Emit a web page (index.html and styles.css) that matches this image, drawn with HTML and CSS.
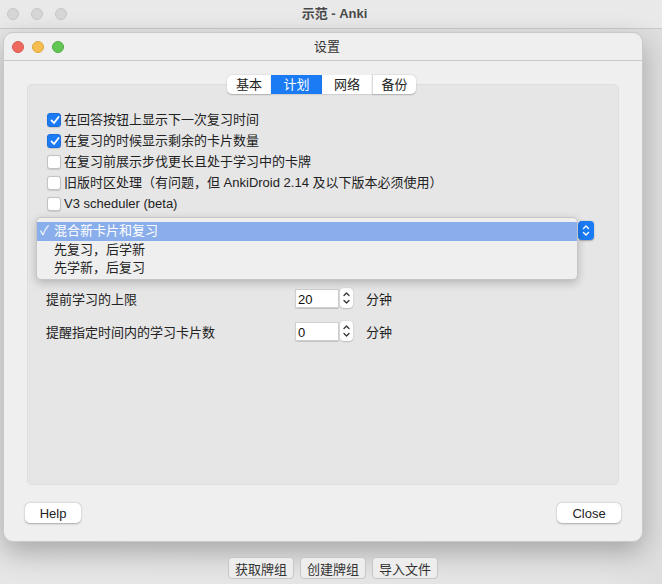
FILE: index.html
```html
<!DOCTYPE html>
<html lang="zh-CN">
  <head>
    <meta charset="UTF-8" />
    <meta name="viewport" content="width=device-width, initial-scale=1.0" />
    <title>设置</title>
    <link rel="stylesheet" href="styles.css">
  </head>
  <body>
    <div class="main_bar">
      <div class="lights">
        <span class="dot gray"></span>
        <span class="dot gray"></span>
        <span class="dot gray"></span>
      </div>
      <div class="main_title">示范 - Anki</div>
    </div>

    <div class="dialog">
      <div class="dlg_bar">
        <div class="lights">
          <span class="dot red"></span>
          <span class="dot yellow"></span>
          <span class="dot green"></span>
        </div>
        <div class="dlg_title">设置</div>
      </div>

      <div class="dlg_body">
        <ul class="tabs">
          <li class="tab first">基本</li>
          <li class="tab on">计划</li>
          <li class="tab">网络</li>
          <li class="tab last">备份</li>
        </ul>

        <div class="pane">
          <ul class="checks">
            <li><span class="box checked"><svg viewBox="0 0 14 14"><path d="M3.5 7.4 L6 10 L10.6 4" /></svg></span>在回答按钮上显示下一次复习时间</li>
            <li><span class="box checked"><svg viewBox="0 0 14 14"><path d="M3.5 7.4 L6 10 L10.6 4" /></svg></span>在复习的时候显示剩余的卡片数量</li>
            <li><span class="box"></span>在复习前展示步伐更长且处于学习中的卡牌</li>
            <li><span class="box"></span>旧版时区处理（有问题，但 AnkiDroid 2.14 及以下版本必须使用）</li>
            <li><span class="box"></span>V3 scheduler (beta)</li>
          </ul>

          <div class="combo_row">
            <div class="combo">
              <span class="combo_btn">
                <svg viewBox="0 0 16 19"><path d="M5.5 7.5 L8 5 L10.5 7.5 M5.5 11.5 L8 14 L10.5 11.5" /></svg>
              </span>
            </div>
          </div>

          <div class="spin_row first_spin">
            <span class="spin_label">提前学习的上限</span>
            <span class="spin_input">20</span>
            <span class="stepper"><svg viewBox="0 0 13 20"><path d="M4 7.5 L6.5 5 L9 7.5 M4 12.5 L6.5 15 L9 12.5" /></svg></span>
            <span class="unit">分钟</span>
          </div>
          <div class="spin_row">
            <span class="spin_label">提醒指定时间内的学习卡片数</span>
            <span class="spin_input">0</span>
            <span class="stepper"><svg viewBox="0 0 13 20"><path d="M4 7.5 L6.5 5 L9 7.5 M4 12.5 L6.5 15 L9 12.5" /></svg></span>
            <span class="unit">分钟</span>
          </div>

          <!-- 펼쳐진 팝업 -->
          <ul class="popup">
            <li class="sel"><span class="tick">✓</span>混合新卡片和复习</li>
            <li><span class="tick"></span>先复习，后学新</li>
            <li><span class="tick"></span>先学新，后复习</li>
          </ul>
        </div>

        <div class="footer">
          <button class="btn">Help</button>
          <button class="btn close">Close</button>
        </div>
      </div>
    </div>

    <div class="main_buttons">
      <button class="mbtn">获取牌组</button>
      <button class="mbtn">创建牌组</button>
      <button class="mbtn">导入文件</button>
    </div>
  </body>
</html>
```

FILE: styles.css
```css
* {
  margin: 0;
  padding: 0;
  box-sizing: border-box;
}
li {
  list-style: none;
}
body {
  width: 662px;
  height: 584px;
  overflow: hidden;
  background: linear-gradient(to right, #e6e6e6 0%, #e4e4e4 90%, #dedede 100%);
  font-family: "Liberation Sans", "Noto Sans CJK SC", sans-serif;
  font-size: 13px;
  color: #222;
}

/* 창 제목줄 */
.main_bar {
  height: 29px;
  background: #e9e9e9;
  border-bottom: 1px solid #cacaca;
  display: flex;
  align-items: center;
  padding-left: 7px;
}
.lights {
  display: flex;
  gap: 12px;
}
.dot {
  width: 12px;
  height: 12px;
  border-radius: 50%;
  display: block;
}
.dot.gray {
  background: #d6d6d6;
  border: 0.5px solid #c6c6c6;
}
.dot.red {
  background: #ee6a5f;
  border: 0.5px solid #d85a50;
}
.dot.yellow {
  background: #f5be4f;
  border: 0.5px solid #dea73e;
}
.dot.green {
  background: #62c655;
  border: 0.5px solid #50ad45;
}
.main_title,
.dlg_title {
  flex: 1;
  text-align: center;
  color: #4a4a4a;
  font-weight: bold;
  font-size: 13px;
  line-height: 16px;
}
.main_bar .main_title {
  margin-right: 60px;
}

/* 설정 대화상자 */
.dialog {
  width: 640px;
  height: 510px;
  margin: 3px 0 0 3px;
  background: #efefef;
  border-radius: 10px;
  border: 0.5px solid #c9c9c9;
  box-shadow: 0 10px 28px rgba(0, 0, 0, 0.28);
  display: flex;
  flex-direction: column;
}
.dlg_bar {
  height: 28px;
  border-bottom: 1px solid #c8c8c8;
  display: flex;
  align-items: center;
  padding-left: 8px;
  padding-top: 1px;
}
.dlg_bar .lights {
  gap: 8px;
}
.dlg_bar .dlg_title {
  font-weight: normal;
  color: #333;
  margin-right: 52px;
}
.dlg_body {
  flex: 1;
  display: flex;
  flex-direction: column;
  padding: 14px 23px 18px 23px;
}

/* 탭 */
.tabs {
  display: flex;
  justify-content: center;
  height: 19px;
  position: relative;
  z-index: 1;
  margin-left: -3px;
}
.tab {
  width: 50px;
  background: #fff;
  text-align: center;
  line-height: 19px;
  color: #222;
  border-left: 1px solid #d9d9d9;
  box-shadow: 0 0.5px 1.5px rgba(0, 0, 0, 0.25);
}
.tab.first {
  width: 44px;
  border-left: none;
  border-radius: 5px 0 0 5px;
}
.tab.last {
  width: 44px;
  border-radius: 0 5px 5px 0;
}
.tab.on {
  width: 51px;
  background: #1b7bf4;
  color: #fff;
  border-left: none;
}
.tab.on + .tab {
  border-left: none;
}

.pane {
  flex: 1;
  margin-top: -10px;
  background: #e6e6e6;
  border: 1px solid #dedede;
  border-radius: 5px;
  padding: 24px 0 0 18px;
  position: relative;
}

/* 체크박스 */
.checks li {
  display: flex;
  align-items: center;
  height: 21px;
  line-height: 21px;
}
.box {
  width: 14px;
  height: 14px;
  border-radius: 3px;
  background: #fff;
  border: 0.5px solid #c2c2c2;
  box-shadow: 0 0.5px 1px rgba(0, 0, 0, 0.12);
  margin: 0 3px 0 1px;
  display: block;
}
.box.checked {
  background: #1b7bf4;
  border-color: #1a6fdc;
}
.box svg {
  width: 14px;
  height: 14px;
  display: block;
  margin: -0.5px;
}
.box svg path {
  fill: none;
  stroke: #fff;
  stroke-width: 1.8;
  stroke-linecap: round;
  stroke-linejoin: round;
}

/* 콤보 */
.combo_row {
  margin-top: 7px;
  height: 19px;
  padding-right: 24px;
}
.combo {
  height: 19px;
  background: #fff;
  border-radius: 4px;
  display: flex;
  justify-content: flex-end;
}
.combo_btn {
  width: 16px;
  height: 19px;
  background: #1b7bf4;
  border-radius: 4px;
  display: block;
  box-shadow: 0 0.5px 1.5px rgba(0, 0, 0, 0.3);
}
.combo_btn svg,
.stepper svg {
  display: block;
  width: 100%;
  height: 100%;
}
.combo_btn svg path {
  fill: none;
  stroke: #fff;
  stroke-width: 1.4;
  stroke-linecap: round;
  stroke-linejoin: round;
}

/* 스핀박스 */
.spin_row {
  display: flex;
  align-items: center;
  height: 20px;
  margin-top: 13px;
}
.spin_row.first_spin {
  margin-top: 48px;
}
.spin_label {
  width: 249px;
}
.spin_input {
  width: 44px;
  height: 19px;
  background: #fff;
  border: 0.5px solid #cfcfcf;
  box-shadow: 0 0.5px 1px rgba(0, 0, 0, 0.15);
  padding-left: 2px;
  line-height: 19px;
  font-size: 13px;
  color: #111;
}
.stepper {
  width: 13px;
  height: 20px;
  margin-left: 1px;
  background: #fff;
  border-radius: 4px;
  box-shadow: 0 0.5px 1.5px rgba(0, 0, 0, 0.3);
  display: block;
}
.stepper svg path {
  fill: none;
  stroke: #333;
  stroke-width: 1.3;
  stroke-linecap: round;
  stroke-linejoin: round;
}
.unit {
  margin-left: 13px;
}

/* 펼쳐진 목록 */
.popup {
  position: absolute;
  left: 8px;
  top: 132px;
  width: 542px;
  height: 63px;
  background: #efefef;
  border: 0.5px solid #c6c6c6;
  border-radius: 5px;
  box-shadow: 0 3px 10px rgba(0, 0, 0, 0.22);
  padding-top: 4px;
}
.popup li {
  height: 18.5px;
  line-height: 18.5px;
  display: flex;
  color: #222;
}
.popup li.sel {
  background: #8aaeeb;
  color: #fff;
}
.tick {
  width: 17px;
  padding-left: 3px;
  font-size: 13px;
}

/* 하단 버튼 */
.footer {
  display: flex;
  justify-content: space-between;
  margin-top: 18px;
  margin-left: -2px;
  margin-right: -2px;
}
.btn {
  height: 20px;
  background: #fff;
  border: none;
  border-radius: 5px;
  box-shadow: 0 0.5px 2px rgba(0, 0, 0, 0.3);
  font-family: "Liberation Sans", "Noto Sans CJK SC", sans-serif;
  font-size: 13px;
  color: #222;
  width: 56px;
}
.btn.close {
  width: 64px;
}

.main_buttons {
  display: flex;
  justify-content: center;
  gap: 6px;
  margin-top: 15px;
  padding-left: 4px;
}
.mbtn {
  width: 66px;
  height: 22px;
  background: #ededed;
  border: 1px solid #c6c6c6;
  border-radius: 4px;
  font-family: "Noto Sans CJK SC", sans-serif;
  font-size: 13px;
  color: #333;
}
```
